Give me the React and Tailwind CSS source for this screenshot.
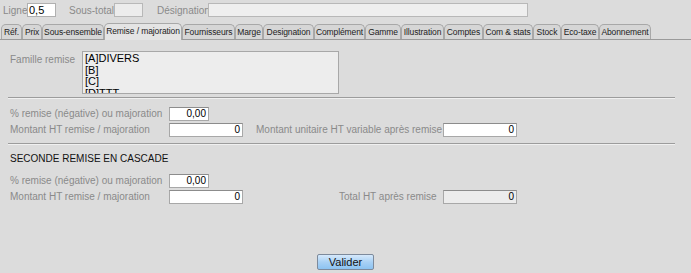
import React from 'react';

const tabs = [
  { label: 'Réf.', w: 'w-[21px]' },
  { label: 'Prix', w: 'w-[20px]' },
  { label: 'Sous-ensemble', w: 'w-[62px]' },
  { label: 'Remise / majoration', w: 'w-[78px]', active: true },
  { label: 'Fournisseurs', w: 'w-[53px]' },
  { label: 'Marge', w: 'w-[28px]' },
  { label: 'Designation', w: 'w-[51px]' },
  { label: 'Complément', w: 'w-[51px]' },
  { label: 'Gamme', w: 'w-[36px]' },
  { label: 'Illustration', w: 'w-[43px]' },
  { label: 'Comptes', w: 'w-[39px]' },
  { label: 'Com & stats', w: 'w-[50px]' },
  { label: 'Stock', w: 'w-[28px]' },
  { label: 'Eco-taxe', w: 'w-[38px]' },
  { label: 'Abonnement', w: 'w-[52px]' },
];

function Field({ value, className, disabled }) {
  return (
    <div
      className={`h-[14px] shrink-0 border border-[#a8a8a8] border-t-[#8c8c8c] text-[10px] leading-[12px] text-black text-right pr-[2px] ${disabled ? 'bg-[#ececec]' : 'bg-white'} ${className}`}
    >
      {value}
    </div>
  );
}

export default function App() {
  return (
    <div className="w-[691px] h-[273px] bg-[#dcdcdc] overflow-hidden whitespace-nowrap font-['Liberation_Sans',Arial,sans-serif] text-[10px] text-[#8a8a8a]">
      {/* top bar */}
      <div className="flex items-center h-[14px] mt-[3px]">
        <span className="ml-[3px] w-[24px] shrink-0">Ligne</span>
        <div className="w-[29px] shrink-0 h-[14px] bg-white border border-[#b0b0b0] text-black text-[11px] leading-[12px] pl-[1px]">0,5</div>
        <span className="ml-[13px] w-[45px] shrink-0">Sous-total</span>
        <div className="w-[29px] shrink-0 h-[14px] bg-[#ececec] border border-[#b8b8b8]" />
        <span className="ml-[14px] w-[51px] shrink-0">Désignation</span>
        <div className="w-[320px] shrink-0 h-[14px] bg-[#efefef] border border-[#b8b8b8]" />
      </div>

      {/* tabs */}
      <div className="flex items-end h-[17px] mt-[6px] border-b border-[#9a9a9a] pl-[1px]">
        {tabs.map((t) => (
          <div
            key={t.label}
            className={`${t.w} shrink-0 flex items-center justify-center overflow-hidden text-[8.5px] tracking-[-0.1px] text-[#222] rounded-t-[5px] border border-b-0 border-[#a8a8a8] ${
              t.active ? 'h-[17px] bg-[#e4e4e4] -mb-px pb-px' : 'h-[15px] bg-[#d6d6d6]'
            }`}
          >
            {t.label}
          </div>
        ))}
      </div>

      {/* famille remise */}
      <div className="flex mt-[11px]">
        <span className="ml-[10px] w-[72px] mt-px">Famille remise</span>
        <div className="w-[257px] h-[43px] bg-[#ededed] border border-[#a8a8a8] overflow-hidden text-[11px] leading-[11.5px] text-black pl-[2px] pt-[1px]">
          <div>[A]DIVERS</div>
          <div>[B]</div>
          <div>[C]</div>
          <div>[D]TTT</div>
        </div>
      </div>

      <div className="ml-[8px] w-[667px] h-0 border-b border-[#9c9c9c] shadow-[0_1px_0_#f0f0f0] mt-[3px]" />

      {/* first remise */}
      <div className="flex items-center mt-[8px]">
        <span className="ml-[10px] w-[159px]">% remise (négative) ou majoration</span>
        <Field value="0,00" className="w-[40px]" />
      </div>
      <div className="flex items-center mt-px">
        <span className="ml-[10px] w-[159px]">Montant HT remise / majoration</span>
        <Field value="0" className="w-[74px]" />
        <span className="ml-[13px] w-[187px]">Montant unitaire HT variable après remise</span>
        <Field value="0" className="w-[74px]" />
      </div>

      <div className="ml-[8px] w-[667px] h-0 border-b border-[#9c9c9c] shadow-[0_1px_0_#f0f0f0] mt-[6px]" />

      {/* seconde remise */}
      <div className="ml-[10px] mt-[7px] text-[10px] text-[#111]">SECONDE REMISE EN CASCADE</div>
      <div className="flex items-center mt-[7px]">
        <span className="ml-[10px] w-[159px]">% remise (négative) ou majoration</span>
        <Field value="0,00" className="w-[40px]" />
      </div>
      <div className="flex items-center mt-px">
        <span className="ml-[10px] w-[159px]">Montant HT remise / majoration</span>
        <Field value="0" className="w-[74px]" />
        <span className="ml-[96px] w-[104px]">Total HT après remise</span>
        <Field value="0" className="w-[74px]" disabled />
      </div>

      {/* valider */}
      <div className="flex justify-center mt-[50px]">
        <button className="w-[57px] h-[16px] rounded-[2px] border border-[#7d8a9c] bg-gradient-to-b from-[#d6e9fb] via-[#a9d1f5] to-[#8cc3f1] text-[11px] leading-[14px] text-[#111]">
          Valider
        </button>
      </div>
    </div>
  );
}
